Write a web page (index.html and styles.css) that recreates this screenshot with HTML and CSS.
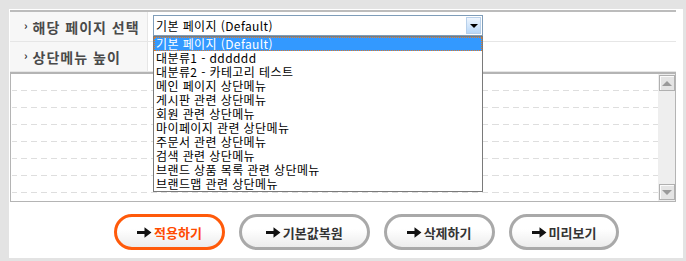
FILE: index.html
```html
<!DOCTYPE html>
<html lang="ko">
<head>
  <meta charset="UTF-8">
  <title>상단메뉴 설정</title>
  <link rel="stylesheet" href="styles.css">
</head>
<body>
  <div class="panel">
    <div class="form">
      <div class="row">
        <div class="label"><span class="bullet">›</span>해당 페이지 선택</div>
        <div class="value">
          <div class="select">
            <span class="select-text">기본 페이지 (Default)</span>
            <span class="select-btn"><span class="tri"></span></span>
            <ul class="dropdown">
              <li class="on">기본 페이지 (Default)</li>
              <li>대분류1 - dddddd</li>
              <li>대분류2 - 카테고리 테스트</li>
              <li>메인 페이지 상단메뉴</li>
              <li>게시판 관련 상단메뉴</li>
              <li>회원 관련 상단메뉴</li>
              <li>마이페이지 관련 상단메뉴</li>
              <li>주문서 관련 상단메뉴</li>
              <li>검색 관련 상단메뉴</li>
              <li>브랜드 상품 목록 관련 상단메뉴</li>
              <li>브랜드맵 관련 상단메뉴</li>
            </ul>
          </div>
        </div>
      </div>
      <div class="row">
        <div class="label"><span class="bullet">›</span>상단메뉴 높이</div>
        <div class="value"></div>
      </div>
    </div>

    <div class="editor">
      <div class="lines">
        <div class="line"></div>
        <div class="line"></div>
        <div class="line"></div>
        <div class="line"></div>
        <div class="line"></div>
        <div class="line"></div>
        <div class="line"></div>
      </div>
      <div class="scrollbar">
        <div class="sb-btn"><span class="sb-up"></span></div>
        <div class="sb-track"></div>
        <div class="sb-btn"><span class="sb-down"></span></div>
      </div>
    </div>

    <div class="buttons">
      <button class="btn btn-apply"><svg class="arrow" viewBox="0 0 14 12"><path d="M0 4.5H7V1L13.5 6L7 11V7.5H0Z"/></svg>적용하기</button>
      <button class="btn btn-wide"><svg class="arrow" viewBox="0 0 14 12"><path d="M0 4.5H7V1L13.5 6L7 11V7.5H0Z"/></svg>기본값복원</button>
      <button class="btn"><svg class="arrow" viewBox="0 0 14 12"><path d="M0 4.5H7V1L13.5 6L7 11V7.5H0Z"/></svg>삭제하기</button>
      <button class="btn"><svg class="arrow" viewBox="0 0 14 12"><path d="M0 4.5H7V1L13.5 6L7 11V7.5H0Z"/></svg>미리보기</button>
    </div>
  </div>
</body>
</html>
```

FILE: styles.css
```css
body {
  margin: 0;
  background: #e3e3e3;
  font-family: "Noto Sans CJK KR", "Noto Sans", sans-serif;
  padding: 9px 3px 4px 9px;
}
.panel {
  background: #fff;
  padding: 1px 7px 8px 1px;
}
.form {
  border-top: 2px solid #bcbcbc;
}
.row {
  display: flex;
  height: 29px;
  border-bottom: 1px solid #e6e6e6;
}
.label {
  width: 138px;
  background: #f7f7f7;
  border-right: 1px solid #e6e6e6;
  display: flex;
  align-items: center;
  font-size: 14px;
  font-weight: bold;
  letter-spacing: 1px;
  color: #4a4a4a;
  padding-left: 14px;
  box-sizing: border-box;
  line-height: 1;
  white-space: nowrap;
}
.bullet {
  font-size: 11px;
  color: #333;
  margin-right: 4px;
  position: relative;
  top: -1px;
}
.value {
  flex: 1;
  padding: 3px 0 0 5px;
}
.select {
  position: relative;
  width: 330px;
  height: 21px;
  box-sizing: border-box;
  border: 1px solid #7f9db9;
  display: flex;
  align-items: center;
  font-size: 12px;
  letter-spacing: 0.4px;
  color: #000;
}
.select-text {
  flex: 1;
  padding-left: 2px;
  line-height: 1;
}
.select-btn {
  width: 15px;
  height: 17px;
  margin-right: 1px;
  border: 1px solid #b8d0ea;
  box-sizing: border-box;
  background: linear-gradient(#eef5fd, #b9d8f9);
  display: flex;
  align-items: center;
  justify-content: center;
}
.tri {
  width: 0;
  height: 0;
  border-left: 4px solid transparent;
  border-right: 4px solid transparent;
  border-top: 4px solid #000;
}
.dropdown {
  position: absolute;
  top: 20px;
  left: -1px;
  width: 330px;
  box-sizing: border-box;
  margin: 0;
  padding: 0;
  list-style: none;
  background: #fff;
  border: 1px solid #7a7a7a;
  z-index: 5;
}
.dropdown li {
  height: 14px;
  line-height: 14px;
  padding-left: 2px;
  font-size: 12px;
  color: #000;
  white-space: nowrap;
}
.dropdown li.on {
  background: #3399ff;
  color: #fff;
  outline: 1px dotted #e07a28;
  outline-offset: -1px;
}
.editor {
  display: flex;
  height: 130px;
  box-sizing: border-box;
  border: 1px solid #b4b4b4;
  border-top: 2px solid #b4b4b4;
}
.lines {
  flex: 1;
  padding-left: 1px;
}
.line {
  height: 16px;
  border-bottom: 1px solid transparent;
  border-image: repeating-linear-gradient(to right, #dedede 0 6px, transparent 6px 10px) 1;
}
.scrollbar {
  width: 17px;
  background: #eeeeee;
  display: flex;
  flex-direction: column;
  padding: 1px 0 1px 1px;
  box-sizing: border-box;
}
.sb-btn {
  height: 16px;
  box-sizing: border-box;
  border: 1px solid #b0b0b0;
  background: #e4e4e4;
  box-shadow: inset 1px 1px 0 #fafafa;
  display: flex;
  align-items: center;
  justify-content: center;
}
.sb-track {
  flex: 1;
}
.sb-up {
  border-left: 5px solid transparent;
  border-right: 5px solid transparent;
  border-bottom: 5px solid #9a9a9a;
}
.sb-down {
  border-left: 5px solid transparent;
  border-right: 5px solid transparent;
  border-top: 5px solid #9a9a9a;
}
.buttons {
  display: flex;
  gap: 14px;
  padding: 12px 0 0 104px;
}
.btn {
  height: 36px;
  padding: 0 20px;
  border: 3px solid #a9a9a9;
  border-radius: 18px;
  background: linear-gradient(#ffffff 40%, #ececec);
  font-family: "Noto Sans CJK KR", "Noto Sans", sans-serif;
  font-size: 13px;
  font-weight: bold;
  color: #333;
  display: flex;
  align-items: center;
  justify-content: center;
  cursor: pointer;
}
.btn-wide {
  padding: 0 24px;
}
.btn-apply {
  border-color: #ff5a0a;
  color: #ff4a00;
}
.arrow {
  width: 15px;
  height: 13px;
  margin-right: 2px;
  fill: #111;
}
```
